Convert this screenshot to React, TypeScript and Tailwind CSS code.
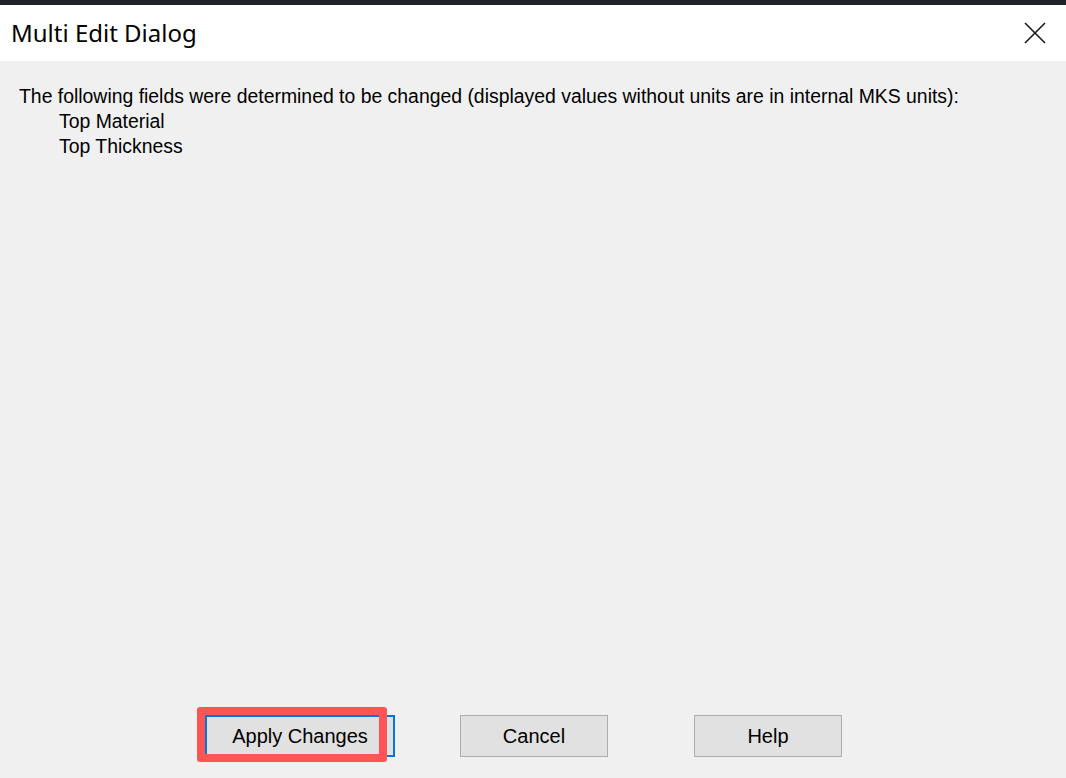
import React from 'react';

const FIELDS = ['Top Material', 'Top Thickness'];

const DialogButton = ({
  label,
  width,
  focused = false,
}: {
  label: string;
  width: string;
  focused?: boolean;
}) => {
  return (
    <button
      type="button"
      className={
        focused
          ? `${width} h-[42px] bg-[#e1e1e1] border-2 border-[#0078d7] text-[20px] text-black`
          : `${width} h-[42px] bg-[#e1e1e1] border border-[#adadad] text-[20px] text-black`
      }
      style={{ fontFamily: '"Liberation Sans", Arial, sans-serif' }}
    >
      {label}
    </button>
  );
};

export default function App() {
  return (
    <div className="flex flex-col w-full h-screen bg-[#f0f0f0] overflow-hidden">
      {/* window frame edge */}
      <div className="h-[5px] bg-[#1f2328] shrink-0" />

      {/* title bar */}
      <div className="h-[56px] bg-white flex items-center justify-between pl-[11px] pr-[20px] shrink-0">
        <span
          className="text-[24px] text-black"
          style={{ fontFamily: '"Noto Sans", "Open Sans", sans-serif' }}
        >
          Multi Edit Dialog
        </span>
        <svg width="22" height="22" viewBox="0 0 22 22" className="text-[#1a1a1a]">
          <path d="M1 1 L21 21 M21 1 L1 21" stroke="currentColor" strokeWidth="1.6" fill="none" />
        </svg>
      </div>

      {/* message body */}
      <div
        className="flex-1 pt-[23px] pl-[19px] text-[19.4px] leading-[25px] text-black"
        style={{ fontFamily: '"Liberation Sans", Arial, sans-serif' }}
      >
        <p>
          The following fields were determined to be changed (displayed values without units are in
          internal MKS units):
        </p>
        {FIELDS.map((f) => (
          <p key={f} className="pl-[40px]">
            {f}
          </p>
        ))}
      </div>

      {/* buttons */}
      <div className="flex items-center pl-[205px] pb-[21px] shrink-0">
        <div className="relative">
          <DialogButton label="Apply Changes" width="w-[190px]" focused />
          <div className="absolute left-[-8px] top-[-8px] w-[190px] h-[55px] border-[8px] border-[#fd5454] rounded-[3px] pointer-events-none" />
        </div>
        <div className="ml-[65px]">
          <DialogButton label="Cancel" width="w-[148px]" />
        </div>
        <div className="ml-[86px]">
          <DialogButton label="Help" width="w-[148px]" />
        </div>
      </div>
    </div>
  );
}
